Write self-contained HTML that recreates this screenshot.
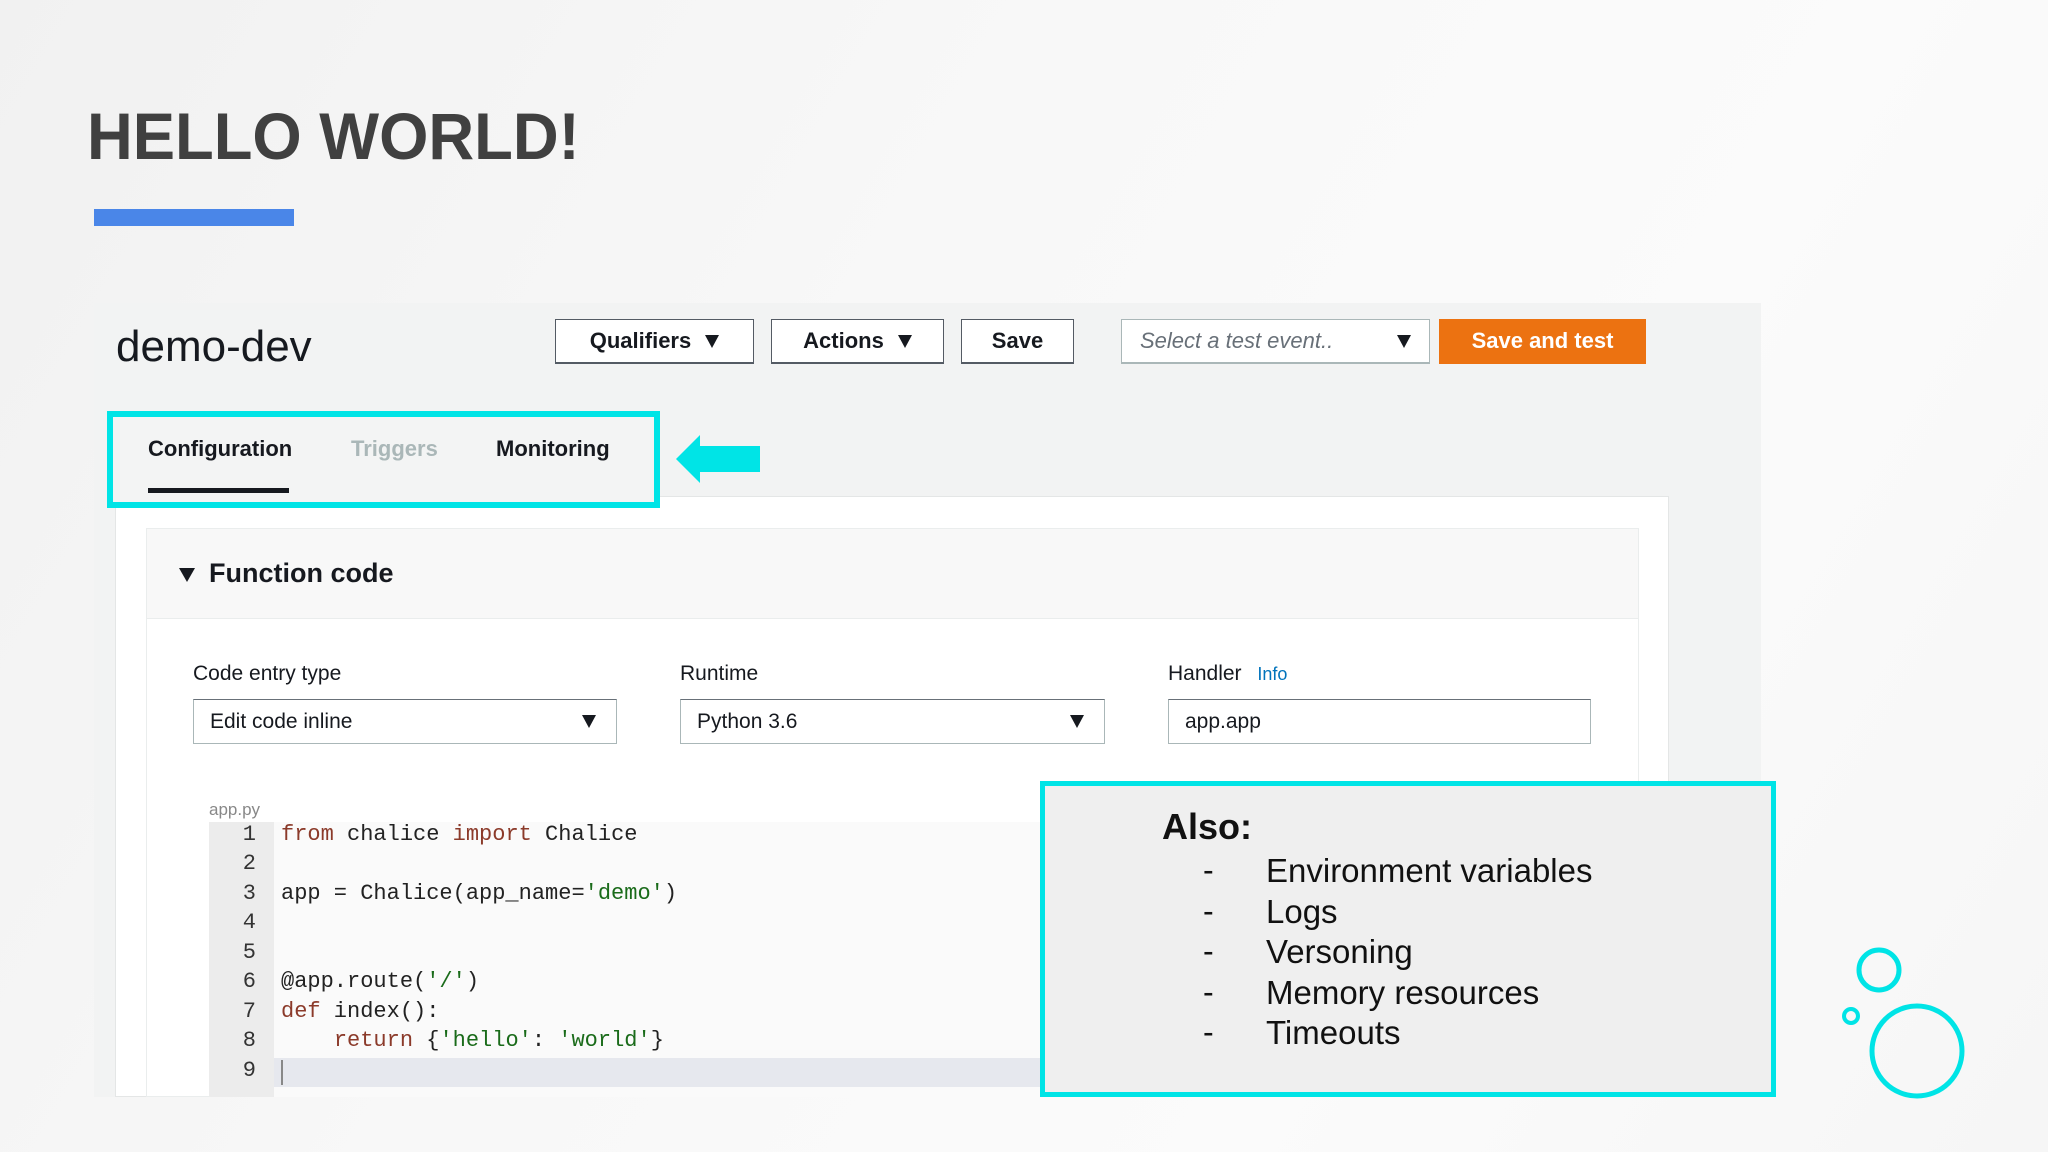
<!DOCTYPE html>
<html><head><meta charset="utf-8"><style>
*{margin:0;padding:0;box-sizing:border-box}
body{width:2048px;height:1152px;overflow:hidden;position:relative;font-family:"Liberation Sans",sans-serif;background:linear-gradient(120deg,#f1f1f1 0%,#f8f8f8 40%,#fbfbfb 70%,#f6f6f6 100%)}
.a{position:absolute}
.title{left:87px;top:100px;font-size:66px;font-weight:bold;color:#404040;transform:scaleX(0.96);transform-origin:left top;line-height:72px}
.btn{position:absolute;top:319px;height:45px;border:1.5px solid #545b64;background:#fff;font-weight:bold;font-size:22px;color:#16191f;display:flex;align-items:center;justify-content:center;gap:14px;border-bottom-width:2.5px}
.tri{display:inline-block;width:0;height:0;border-left:7px solid transparent;border-right:7px solid transparent;border-top:13px solid #16191f}
.lbl{position:absolute;top:662px;font-size:21px;color:#16191f}
.inp{position:absolute;top:699px;height:45px;border:1.5px solid #aab7b8;background:#fff;font-size:21px;color:#16191f;padding-left:16px;display:flex;align-items:center;border-top-color:#687078}
.inp .tri{position:absolute;right:20px;top:15px}
.code{position:absolute;left:281px;font-family:"Liberation Mono",monospace;font-size:22px;color:#222;white-space:pre}
.ln{position:absolute;left:230px;font-family:"Liberation Mono",monospace;font-size:22px;color:#333;width:26px;text-align:right}
.k{color:#8b3a2a}.s{color:#1a6b1a}
.it{position:absolute;left:1266px;font-size:33px;color:#111}
.dash{position:absolute;left:1203px;font-size:32px;color:#111}
</style></head><body>
<div class="a title">HELLO WORLD!</div>
<div class="a" style="left:94px;top:209px;width:200px;height:17px;background:#4a86e8"></div>

<div class="a" style="left:94px;top:303px;width:1667px;height:794px;background:#f2f3f3"></div>
<div class="a" style="left:116px;top:322px;font-size:44px;color:#16191f">demo-dev</div>
<div class="btn" style="left:555px;width:199px">Qualifiers <span class="tri"></span></div>
<div class="btn" style="left:771px;width:173px">Actions <span class="tri"></span></div>
<div class="btn" style="left:961px;width:113px">Save</div>
<div class="btn" style="left:1121px;width:309px;justify-content:space-between;padding:0 18px;font-weight:normal;font-style:italic;color:#687078;border-color:#aab7b8">Select a test event.. <span class="tri"></span></div>
<div class="btn" style="left:1439px;width:207px;background:#ec7211;border-color:#ec7211;color:#fff">Save and test</div>

<div class="a" style="left:115px;top:496px;width:1554px;height:601px;background:#fff;border:1px solid #e4e6e6"></div>
<div class="a" style="left:107px;top:411px;width:553px;height:97px;border:6px solid #00e4e6;background:#f3f4f4"></div>
<div class="a" style="left:148px;top:436px;font-size:22px;font-weight:bold;color:#16191f">Configuration</div>
<div class="a" style="left:351px;top:436px;font-size:22px;font-weight:bold;color:#aab7b8">Triggers</div>
<div class="a" style="left:496px;top:436px;font-size:22px;font-weight:bold;color:#16191f">Monitoring</div>
<div class="a" style="left:148px;top:488px;width:141px;height:5px;background:#16191f"></div>
<svg class="a" style="left:672px;top:432px" width="92" height="54"><path d="M4 27 L28 3 L28 14 L88 14 L88 40 L28 40 L28 51 Z" fill="#00e4e6"/></svg>

<div class="a" style="left:146px;top:528px;width:1493px;height:569px;border:1px solid #eaeded;background:#fff"></div>
<div class="a" style="left:147px;top:529px;width:1491px;height:90px;background:#f8f8f8;border-bottom:1px solid #eaeded"></div>
<div class="a" style="left:179px;top:568px;width:0;height:0;border-left:8px solid transparent;border-right:8px solid transparent;border-top:14px solid #16191f"></div>
<div class="a" style="left:209px;top:558px;font-size:27px;font-weight:bold;color:#16191f">Function code</div>

<div class="lbl" style="left:193px">Code entry type</div>
<div class="lbl" style="left:680px">Runtime</div>
<div class="lbl" style="left:1168px">Handler <span style="color:#0073bb;font-size:18px;margin-left:10px">Info</span></div>
<div class="inp" style="left:193px;width:424px">Edit code inline<span class="tri"></span></div>
<div class="inp" style="left:680px;width:425px">Python 3.6<span class="tri"></span></div>
<div class="inp" style="left:1168px;width:423px">app.app</div>

<div class="a" style="left:209px;top:800px;font-size:17px;color:#888">app.py</div>
<div class="a" style="left:209px;top:822px;width:840px;height:275px;background:#fafafa"></div>
<div class="a" style="left:209px;top:822px;width:65px;height:275px;background:#ececec"></div>
<div class="a" style="left:274px;top:1058px;width:775px;height:29px;background:#e6e8ee"></div>
<div class="a" style="left:281px;top:1060px;width:2px;height:25px;background:#888"></div>
<div class="ln" style="top:822px">1</div><div class="code" style="top:822px"><span class="k">from</span> chalice <span class="k">import</span> Chalice</div>
<div class="ln" style="top:851px">2</div>
<div class="ln" style="top:881px">3</div><div class="code" style="top:881px">app = Chalice(app_name=<span class="s">'demo'</span>)</div>
<div class="ln" style="top:910px">4</div>
<div class="ln" style="top:940px">5</div>
<div class="ln" style="top:969px">6</div><div class="code" style="top:969px">@app.route(<span class="s">'/'</span>)</div>
<div class="ln" style="top:999px">7</div><div class="code" style="top:999px"><span class="k">def</span> index():</div>
<div class="ln" style="top:1028px">8</div><div class="code" style="top:1028px">    <span class="k">return</span> {<span class="s">'hello'</span>: <span class="s">'world'</span>}</div>
<div class="ln" style="top:1058px">9</div>

<div class="a" style="left:1040px;top:781px;width:736px;height:316px;background:#efefef;border:5px solid #00e4e6"></div>
<div class="a" style="left:1162px;top:806px;font-size:36px;font-weight:bold;color:#111">Also:</div>
<div class="dash" style="top:852px">-</div><div class="it" style="top:852px">Environment variables</div>
<div class="dash" style="top:893px">-</div><div class="it" style="top:893px">Logs</div>
<div class="dash" style="top:933px">-</div><div class="it" style="top:933px">Versoning</div>
<div class="dash" style="top:974px">-</div><div class="it" style="top:974px">Memory resources</div>
<div class="dash" style="top:1014px">-</div><div class="it" style="top:1014px">Timeouts</div>

<svg class="a" style="left:0;top:0" width="2048" height="1152">
<circle cx="1879" cy="970" r="20" fill="none" stroke="#00e4e6" stroke-width="5"/>
<circle cx="1851" cy="1016" r="7" fill="none" stroke="#00e4e6" stroke-width="4"/>
<circle cx="1917" cy="1051" r="45" fill="none" stroke="#00e4e6" stroke-width="5"/>
</svg>
</body></html>
